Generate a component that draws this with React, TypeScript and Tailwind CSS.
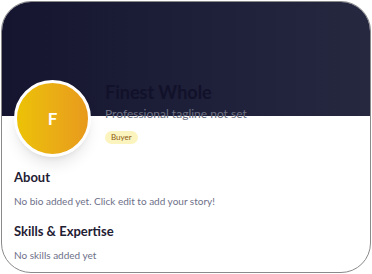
export default function App() {
  return (
    <div className="w-[372px] h-[274px] bg-white p-px" style={{ fontFamily: 'Lato, "Open Sans", sans-serif' }}>
      <div className="h-full rounded-[30px] border-[1.5px] border-[#8a8a8a] overflow-hidden bg-white">
        {/* banner */}
        <div className="h-[114px] bg-gradient-to-r from-[#151530] to-[#262840]" />

        {/* header row */}
        <div className="flex gap-[14px] pl-[12px] -mt-[36px]">
          <div className="w-[77px] h-[77px] shrink-0 rounded-full border-[3px] border-white bg-gradient-to-r from-[#ecc205] to-[#e89a1c] shadow-lg flex items-center justify-center">
            <span className="text-white font-bold text-[17px]">F</span>
          </div>
          <div className="pt-[1px]">
            <h1 className="text-[18px] font-bold leading-[22px] text-[#11112a]">Finest Whole</h1>
            <p className="text-[12px] leading-[16px] text-[#6b6f80] mt-[3px]">Professional tagline not set</p>
            <span className="inline-block mt-[8px] px-[6px] py-[1px] rounded-full bg-[#fcf4bf] text-[#8a5a12] text-[8px] leading-[11px]">Buyer</span>
          </div>
        </div>

        {/* body */}
        <div className="px-[12px] mt-[12px]">
          <h2 className="text-[13px] font-bold text-[#1f2033] leading-[16px]">About</h2>
          <p className="text-[10px] text-[#6d7088] mt-[9px] leading-[14px]">No bio added yet. Click edit to add your story!</p>
          <h2 className="text-[13px] font-bold text-[#1f2033] leading-[16px] mt-[15px]">Skills &amp; Expertise</h2>
          <p className="text-[10px] text-[#6d7088] mt-[9px] leading-[14px]">No skills added yet</p>
        </div>
      </div>
    </div>
  );
}
